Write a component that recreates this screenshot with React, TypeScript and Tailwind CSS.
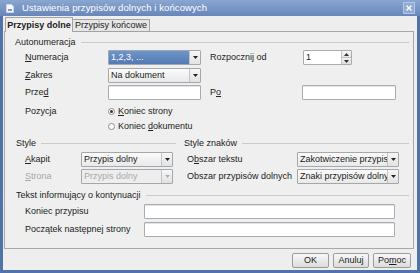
import React from "react";

const U = ({ children }: { children: React.ReactNode }) => (
  <span className="underline underline-offset-[1px] decoration-[1px]">{children}</span>
);

function Arrow({ disabled }: { disabled?: boolean }) {
  return (
    <div className="w-[11px] h-full flex items-center justify-center bg-gradient-to-b from-[#f7f7f7] to-[#e2e2e2] border-l border-[#c4c4c4]">
      <svg width="5" height="3" viewBox="0 0 5 3">
        <path d="M0 0 L5 0 L2.5 3 Z" fill={disabled ? "#b0b0b0" : "#222"} />
      </svg>
    </div>
  );
}

function Select({
  w,
  text,
  active,
  disabled,
}: {
  w: string;
  text: string;
  active?: boolean;
  disabled?: boolean;
}) {
  return (
    <div className={`${w} h-[15px] flex border border-[#a3a8ae] rounded-[1px] overflow-hidden`}>
      <div
        className={`flex-1 min-w-0 flex items-center pl-[2px] whitespace-nowrap overflow-hidden ${
          active
            ? "bg-gradient-to-b from-[#6e95cb] to-[#5479b3] text-white"
            : disabled
            ? "bg-[#eeeeee] text-[#a8a8a8]"
            : "bg-gradient-to-b from-[#fbfbfb] to-[#e9e9e9] text-[#1a1a1a]"
        }`}
      >
        {text}
      </div>
      <Arrow disabled={disabled} />
    </div>
  );
}

function Input({ w }: { w: string }) {
  return <div className={`${w} h-[15px] bg-white border border-[#a8adb3] rounded-[1px] shadow-[inset_0_1px_0_#e4e4e4]`} />;
}

function Radio({ checked }: { checked?: boolean }) {
  return (
    <div className="w-[7px] h-[7px] rounded-full border border-[#8c8c8c] bg-white flex items-center justify-center">
      {checked && <div className="w-[3px] h-[3px] rounded-full bg-[#333]" />}
    </div>
  );
}

function Header({ children, cls }: { children: React.ReactNode; cls: string }) {
  return (
    <div className={`h-[12px] flex items-center ${cls}`}>
      <span className="whitespace-nowrap">{children}</span>
      <div className="flex-1 h-px bg-[#cbcbcb] ml-[5px]" />
    </div>
  );
}

function Btn({ w, children }: { w: string; children: React.ReactNode }) {
  return (
    <div
      className={`${w} h-[15px] flex items-center justify-center border border-[#9c9c9c] rounded-[2px] bg-gradient-to-b from-[#f8f8f8] to-[#dcdcdc] text-[#1a1a1a]`}
    >
      {children}
    </div>
  );
}

export default function App() {
  return (
    <div className="w-[420px] h-[273px] bg-[#5073a9] flex flex-col overflow-hidden font-['Liberation_Sans',Arial,sans-serif] text-[9px] text-[#222] leading-none">
      {/* title bar */}
      <div className="h-[16px] flex items-center bg-gradient-to-b from-[#8aa6d0] to-[#6786ba] pl-[6px]">
        <svg width="8" height="9" viewBox="0 0 8 9">
          <path d="M0.5 0.5 H5.5 L7.5 2.5 V8.5 H0.5 Z" fill="#f4f6fa" stroke="#c9d4e6" />
          <rect x="2" y="5" width="4" height="2" fill="#7c9ac8" />
        </svg>
        <span className="ml-[8px] text-white text-[9.5px] tracking-[0.1px]">
          Ustawienia przypisów dolnych i końcowych
        </span>
        <div className="ml-auto mr-[5px] w-[12px] h-[12px] bg-[#8faad4] border border-[#b5c7e3] flex items-center justify-center">
          <svg width="6" height="6" viewBox="0 0 6 6">
            <path d="M0.5 0.5 L5.5 5.5 M5.5 0.5 L0.5 5.5" stroke="#fff" strokeWidth="1.4" />
          </svg>
        </div>
      </div>

      {/* content */}
      <div className="flex-1 mx-[3px] mb-[3px] bg-[#eeeeee] flex flex-col">
        {/* tabs */}
        <div className="flex items-end h-[16px] pl-[2px] relative z-10 -mb-px">
          <div className="h-[15px] w-[68px] flex items-center justify-center border border-b-0 border-[#a2a2a2] bg-[#efefef] font-bold rounded-t-[1px] whitespace-nowrap">
            Przypisy dolne
          </div>
          <div className="h-[13px] w-[77px] flex items-center justify-center border border-l-0 border-b border-[#a2a2a2] bg-[#e6e6e6] rounded-t-[1px] whitespace-nowrap">
            Przypisy końcowe
          </div>
        </div>

        {/* panel */}
        <div className="ml-[1px] mr-[3px] h-[218px] border border-[#a9a9a9] bg-[#efefef] flex flex-col">
          <Header cls="mt-[4px] pl-[10px] pr-[4px]">Autonumeracja</Header>

          <div className="mt-[2px] h-[15px] flex items-center">
            <div className="w-[103px] pl-[20px]">
              <U>N</U>umeracja
            </div>
            <Select w="w-[93px]" text="1,2,3, ..." active />
            <div className="ml-[9px] w-[93px]">Rozpocznij od</div>
            <div className="w-[49px] h-[15px] flex bg-white border border-[#a8adb3] rounded-[1px]">
              <div className="flex-1 flex items-center pl-[2px]">1</div>
              <div className="w-[10px] flex flex-col border-l border-[#c4c4c4]">
                <div className="flex-1 flex items-center justify-center bg-gradient-to-b from-[#f7f7f7] to-[#e4e4e4] border-b border-[#c4c4c4]">
                  <svg width="5" height="3" viewBox="0 0 5 3">
                    <path d="M0 3 L5 3 L2.5 0 Z" fill="#333" />
                  </svg>
                </div>
                <div className="flex-1 flex items-center justify-center bg-gradient-to-b from-[#f2f2f2] to-[#dedede]">
                  <svg width="5" height="3" viewBox="0 0 5 3">
                    <path d="M0 0 L5 0 L2.5 3 Z" fill="#333" />
                  </svg>
                </div>
              </div>
            </div>
          </div>

          <div className="mt-[3px] h-[15px] flex items-center">
            <div className="w-[103px] pl-[20px]">
              <U>Z</U>akres
            </div>
            <Select w="w-[93px]" text="Na dokument" />
          </div>

          <div className="mt-[2px] h-[15px] flex items-center">
            <div className="w-[103px] pl-[20px]">
              Prze<U>d</U>
            </div>
            <Input w="w-[93px]" />
            <div className="ml-[9px] w-[92px]">
              P<U>o</U>
            </div>
            <Input w="w-[94px]" />
          </div>

          <div className="mt-[5px] h-[13px] flex items-center">
            <div className="w-[103px] pl-[20px]">Pozycja</div>
            <Radio checked />
            <span className="ml-[3px]">
              <U>K</U>oniec strony
            </span>
          </div>
          <div className="mt-[2px] h-[13px] flex items-center">
            <div className="w-[103px]" />
            <Radio />
            <span className="ml-[3px]">
              Koniec <U>d</U>okumentu
            </span>
          </div>

          <div className="mt-[4px] flex">
            <Header cls="w-[179px] pl-[11px] pr-[8px]">Style</Header>
            <Header cls="flex-1 pr-[4px]">Style znaków</Header>
          </div>

          <div className="mt-[3px] h-[15px] flex items-center">
            <div className="w-[76px] pl-[20px]">
              <U>A</U>kapit
            </div>
            <Select w="w-[92px]" text="Przypis dolny" />
            <div className="ml-[14px] w-[110px]">
              O<U>b</U>szar tekstu
            </div>
            <Select w="w-[102px]" text="Zakotwiczenie przypisu" />
          </div>

          <div className="mt-[2px] h-[15px] flex items-center">
            <div className="w-[76px] pl-[20px] text-[#a8a8a8]">
              <U>S</U>trona
            </div>
            <Select w="w-[92px]" text="Przypis dolny" disabled />
            <div className="ml-[14px] w-[110px] whitespace-nowrap">Obszar przypisów dolnych</div>
            <Select w="w-[102px]" text="Znaki przypisów dolnych" />
          </div>

          <Header cls="mt-[5px] pl-[11px] pr-[4px]">Tekst informujący o kontynuacji</Header>

          <div className="mt-[3px] h-[15px] flex items-center">
            <div className="w-[139px] pl-[20px]">Koniec przypisu</div>
            <Input w="w-[251px]" />
          </div>
          <div className="mt-[3px] h-[15px] flex items-center">
            <div className="w-[139px] pl-[20px]">Początek następnej strony</div>
            <Input w="w-[251px]" />
          </div>
        </div>

        {/* buttons */}
        <div className="mt-[4px] h-[15px] flex justify-end gap-[4px] pr-[6px]">
          <Btn w="w-[37px]">OK</Btn>
          <Btn w="w-[36px]">Anuluj</Btn>
          <Btn w="w-[38px]">
            Po<U>m</U>oc
          </Btn>
        </div>
      </div>
    </div>
  );
}
